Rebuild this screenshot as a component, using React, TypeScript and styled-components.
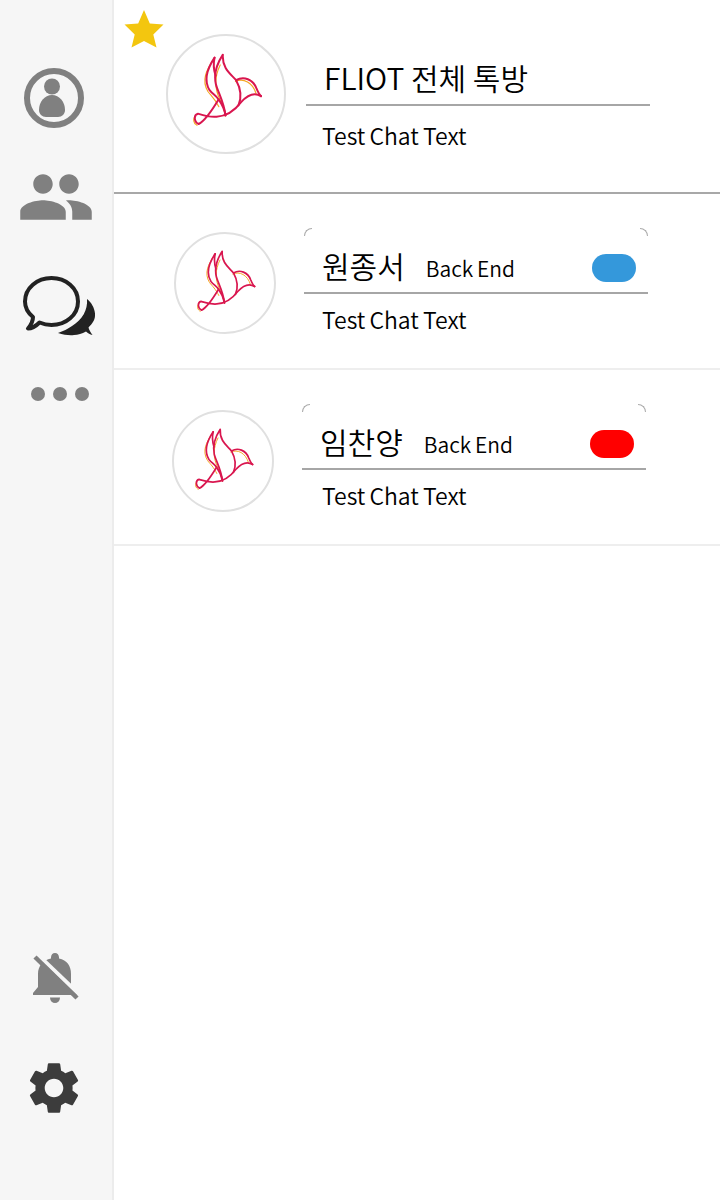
import React from "react";
import styled, { createGlobalStyle } from "styled-components";
import { MdPeople, MdSettings } from "react-icons/md";

const Global = createGlobalStyle`
  html, body { margin: 0; padding: 0; background: #fff; }
  body { font-family: "Noto Sans CJK KR", "Noto Sans", sans-serif; color: #000; }
  * { box-sizing: border-box; }
`;

const Page = styled.div`
  width: 720px;
  height: 1200px;
  display: flex;
  overflow: hidden;
`;

const Sidebar = styled.nav`
  width: 114px;
  height: 100%;
  flex: none;
  background: #f6f6f6;
  border-right: 2px solid #ececec;
  display: flex;
  flex-direction: column;
  justify-content: space-between;
`;

const NavGroup = styled.div`
  display: flex;
  flex-direction: column;
`;

const NavSlot = styled.div<{ $h: number; $dx?: number }>`
  height: ${(p) => p.$h}px;
  display: flex;
  align-items: center;
  justify-content: center;
  padding-left: ${(p) => p.$dx ?? 0}px;
  padding-right: 4px;
`;

const TopSpacer = styled.div`
  height: 60px;
`;

const BottomSpacer = styled.div`
  height: 57px;
`;

const Main = styled.main`
  flex: 1;
  display: flex;
  flex-direction: column;
`;

const Row = styled.section<{ $h: number; $line: string; $pl: number; $gap: number }>`
  position: relative;
  height: ${(p) => p.$h}px;
  display: flex;
  align-items: flex-start;
  padding-left: ${(p) => p.$pl}px;
  gap: ${(p) => p.$gap}px;
  border-bottom: 2px solid ${(p) => p.$line};
`;

const StarMark = styled.svg`
  position: absolute;
  left: 10px;
  top: 9px;
  width: 40px;
  height: 40px;
`;

const Avatar = styled.div<{ $size: number; $top: number }>`
  width: ${(p) => p.$size}px;
  height: ${(p) => p.$size}px;
  margin-top: ${(p) => p.$top}px;
  flex: none;
  border: 2px solid #e0e0e0;
  border-radius: 50%;
  display: flex;
  align-items: center;
  justify-content: center;
`;

const BirdMark = styled.svg<{ $dy: number }>`
  margin: ${(p) => p.$dy * 2}px 0 0 4px;
  flex: none;
`;

const Info = styled.div<{ $top: number }>`
  position: relative;
  width: 344px;
  flex: none;
  margin-top: ${(p) => p.$top}px;
`;

const Corner = styled.span<{ $side: "left" | "right" }>`
  position: absolute;
  top: 0;
  ${(p) => p.$side}: 0;
  width: 8px;
  height: 8px;
  border-top: 1px solid #aaa;
  ${(p) => (p.$side === "left" ? "border-left: 1px solid #aaa; border-top-left-radius: 8px;" : "border-right: 1px solid #aaa; border-top-right-radius: 8px;")}
`;

const Head = styled.div<{ $h: number; $pl: number; $pt: number }>`
  height: ${(p) => p.$h}px;
  display: flex;
  align-items: center;
  padding: ${(p) => p.$pt}px 12px 0 ${(p) => p.$pl}px;
  border-bottom: 2px solid #a6a6a6;
`;

const Title = styled.span`
  font-size: 30px;
  font-weight: 350;
  line-height: 40px;
  margin-bottom: 6px;
  white-space: nowrap;
`;

const Dept = styled.span`
  margin-left: 21px;
  font-size: 21px;
  font-weight: 350;
  line-height: 30px;
  word-spacing: -1px;
  white-space: nowrap;
`;

const Status = styled.span<{ $color: string }>`
  width: 44px;
  height: 28px;
  margin-left: auto;
  border-radius: 14px;
  background: ${(p) => p.$color};
`;

const Message = styled.p<{ $pl: number; $mt: number }>`
  margin: ${(p) => p.$mt}px 0 0;
  padding-left: ${(p) => p.$pl}px;
  font-size: 23px;
  font-weight: 350;
  line-height: 30px;
  word-spacing: -1px;
  white-space: nowrap;
`;

const UserCircle = () => (
  <svg width="62" height="62" viewBox="0 0 62 62">
    <circle cx="31" cy="31" r="27" fill="none" stroke="#808080" strokeWidth="6" />
    <circle cx="29" cy="19.500" r="8" fill="#808080" />
    <path d="M29 28c-7.500 0-13 7-13 15 0 4 3 7 7 7h12c4 0 7-3 7-7 0-8-5.500-15-13-15z" fill="#808080" />
  </svg>
);

const Chats = () => (
  <svg width="76" height="64" viewBox="0 0 76 64">
    <path
      d="M31.500 4C17 4 5 14 5 27.500C5 33.500 8 39 13 43C13 47 11 51 8 54.500C12 54.500 16 52 19.500 48.500C23 50 27 51 31.500 51C46 51 58 41 58 27.500C58 14 46 4 31.500 4z"
      fill="none"
      stroke="#222"
      strokeWidth="4"
      strokeLinejoin="round"
    />
    <path
      d="M67 25C68 36 62 46 52 52C48 55 43 57 38 59C44 61 50 61.500 54 61C58 61 62 59.500 66 57.500C68 59.500 70 60.500 72.500 61C70.500 58 69 56 68.500 53.500C73 49 75.500 45 75 39.500C74.500 33.500 71 28 67 25z"
      fill="#222"
    />
  </svg>
);

const DotRow = styled.div`
  display: flex;
  gap: 8px;
`;

const Dot = styled.span`
  width: 14px;
  height: 14px;
  border-radius: 50%;
  background: #808080;
`;

const BellOff = () => (
  <svg width="50" height="56" viewBox="0 0 50 56">
    <path
      d="M25 3c-2.500 0-4 2-4 4.500v1C13 10 8 16 8 24V37L3 43v2H47V43L41 37V24C41 16 37 10 29 8.500v-1C29 5 27.500 3 25 3z"
      fill="#808080"
    />
    <path d="M20 47.500a5 5.500 0 0 0 10 0z" fill="#808080" />
    <path d="M8 5 51 46" stroke="#f6f6f6" strokeWidth="4" />
    <path d="M5 7 47 48" stroke="#808080" strokeWidth="4.500" />
  </svg>
);

const Bird = ({ w, dy }: { w: number; dy: number }) => (
  <BirdMark $dy={dy} width={w} height={w * (225 / 220)} viewBox="232 155 220 225" fill="none" strokeLinejoin="round" strokeLinecap="round">
    <g stroke="#f5a623" strokeWidth="3.500" transform="translate(-5 4)">
      <path d="M300 176C282 204 264 236 285 270C296 284 306 292 318 316" />
      <path d="M322 190C304 226 304 260 322 296C330 312 336 328 337 344" />
      <path d="M368 240C392 228 420 244 430 276" />
      <path d="M248 344C238 352 242 368 252 372" />
    </g>
    <g stroke="#d9164f" strokeWidth="6">
      <path d="M440 288C435 284 431 276 426 264C416 238 388 226 365 240C350 222 322 205 325 163C306 192 298 226 304 252C310 276 328 304 333 346" />
      <path d="M300 172C280 202 266 240 285 270C294 282 304 286 312 298C322 312 330 328 333 346" />
      <path d="M300 172C296 190 297 208 303 226" />
      <path d="M365 240C376 260 384 288 372 316" />
      <path d="M440 288C418 274 398 286 380 306C362 330 340 348 306 350C284 352 266 346 250 341C236 344 238 366 252 372C272 362 294 328 312 298" />
    </g>
  </BirdMark>
);

const Star = () => (
  <StarMark viewBox="0 0 40 40">
    <path d="M20 1 25.800 14.500 39.500 15.500 29.300 25.500 32.500 38.500 20 32 7.500 38.500 10.700 25.500 .5 15.500 14.200 14.500z" fill="#f3c60f" />
  </StarMark>
);

export default function App() {
  return (
    <Page>
      <Global />
      <Sidebar>
        <NavGroup>
          <TopSpacer />
          <NavSlot $h={76}>
            <UserCircle />
          </NavSlot>
          <NavSlot $h={122} $dx={4}>
            <MdPeople size={78} color="#808080" />
          </NavSlot>
          <NavSlot $h={96} $dx={8}>
            <Chats />
          </NavSlot>
          <NavSlot $h={80} $dx={12}>
            <DotRow>
              <Dot />
              <Dot />
              <Dot />
            </DotRow>
          </NavSlot>
        </NavGroup>
        <NavGroup>
          <NavSlot $h={110} $dx={2}>
            <BellOff />
          </NavSlot>
          <NavSlot $h={110}>
            <MdSettings size={62} color="#3c3c3c" />
          </NavSlot>
          <BottomSpacer />
        </NavGroup>
      </Sidebar>
      <Main>
        <Row $h={194} $line="#a8a8a8" $pl={52} $gap={20}>
          <Star />
          <Avatar $size={120} $top={34}>
            <Bird w={73} dy={-4.5} />
          </Avatar>
          <Info $top={52}>
            <Head $h={54} $pl={18} $pt={4}>
              <Title>FLIOT 전체 톡방</Title>
            </Head>
            <Message $pl={16} $mt={14}>Test Chat Text</Message>
          </Info>
        </Row>
        <Row $h={176} $line="#eeeeee" $pl={60} $gap={28}>
          <Avatar $size={102} $top={38}>
            <Bird w={62} dy={-2} />
          </Avatar>
          <Info $top={34}>
            <Corner $side="left" />
            <Corner $side="right" />
            <Head $h={66} $pl={18} $pt={16}>
              <Title>원종서</Title>
              <Dept>Back End</Dept>
              <Status $color="#3498db" />
            </Head>
            <Message $pl={18} $mt={10}>Test Chat Text</Message>
          </Info>
        </Row>
        <Row $h={176} $line="#eeeeee" $pl={58} $gap={28}>
          <Avatar $size={102} $top={40}>
            <Bird w={62} dy={-2} />
          </Avatar>
          <Info $top={34}>
            <Corner $side="left" />
            <Corner $side="right" />
            <Head $h={66} $pl={18} $pt={16}>
              <Title>임찬양</Title>
              <Dept>Back End</Dept>
              <Status $color="#ff0000" />
            </Head>
            <Message $pl={20} $mt={10}>Test Chat Text</Message>
          </Info>
        </Row>
      </Main>
    </Page>
  );
}
